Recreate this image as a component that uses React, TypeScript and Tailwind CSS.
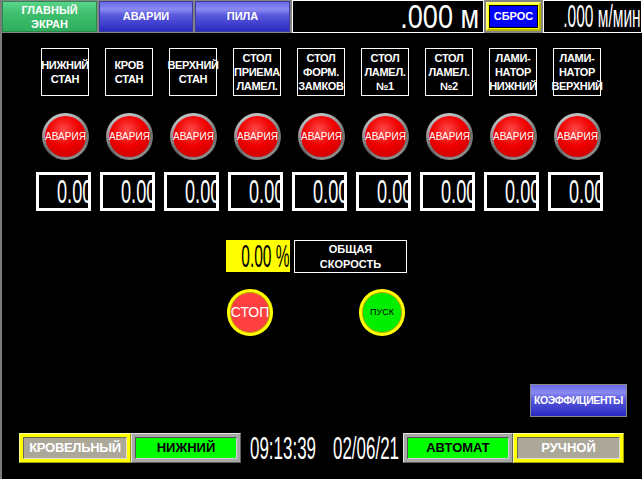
import React from "react";

const labels = [
  ["НИЖНИЙ", "СТАН"],
  ["КРОВ", "СТАН"],
  ["ВЕРХНИЙ", "СТАН"],
  ["СТОЛ", "ПРИЕМА", "ЛАМЕЛ."],
  ["СТОЛ", "ФОРМ.", "ЗАМКОВ"],
  ["СТОЛ", "ЛАМЕЛ.", "№1"],
  ["СТОЛ", "ЛАМЕЛ.", "№2"],
  ["ЛАМИ-", "НАТОР", "НИЖНИЙ"],
  ["ЛАМИ-", "НАТОР", "ВЕРХНИЙ"],
];

const blueBtn =
  "bg-[linear-gradient(to_bottom,#6a6ae6_0%,#8a8af2_25%,#5a5ade_45%,#2a2ac2_100%)]";

const App = () => {
  return (
    <div className="w-[642px] h-[479px] bg-black border-l-2 border-[#7c7c7c] flex flex-col overflow-hidden font-['Liberation_Sans',Arial,sans-serif] select-none">
      {/* TOP BAR */}
      <div className="h-[33px] bg-[#848484] flex gap-[2px] shrink-0">
        <div className="w-[95px] shrink-0 my-px bg-[linear-gradient(to_bottom,#5ad48a_0%,#3fbf6e_40%,#2fae5e_100%)] border border-[#2a8a4c] flex flex-col items-center justify-center text-white font-bold text-[11px] leading-[14px]">
          <span>ГЛАВНЫЙ</span>
          <span>ЭКРАН</span>
        </div>
        <div className={`w-[94px] shrink-0 my-px ${blueBtn} border border-[#3a3aa0] flex items-center justify-center text-white font-bold text-[11px]`}>
          АВАРИИ
        </div>
        <div className={`w-[95px] shrink-0 my-px ${blueBtn} border border-[#3a3aa0] flex items-center justify-center text-white font-bold text-[11px]`}>
          ПИЛА
        </div>
        <div className="w-[192px] shrink-0 bg-black border border-white flex items-center justify-end pr-[4px]">
          <span className="w-[76px] flex justify-end">
            <span className="inline-block shrink-0 text-white text-[33px] leading-[28px] font-light scale-x-[0.82] origin-right whitespace-nowrap">
              .000 м
            </span>
          </span>
        </div>
        <div className="w-[55px] shrink-0 my-[2px] bg-[#ffff00] border-t-2 border-l-2 border-[#ffff66] border-b-2 border-r-2 border-b-[#b8b800] border-r-[#b8b800] p-px">
          <div className="w-full h-full bg-[#0000ff] border border-black flex items-center justify-center text-white font-bold text-[11px]">
            СБРОС
          </div>
        </div>
        <div className="w-[99px] shrink-0 bg-black border border-white flex items-center justify-end overflow-hidden">
          <span className="w-[80px] flex justify-end">
            <span className="inline-block shrink-0 text-white text-[31px] leading-[28px] font-light scale-x-[0.5] origin-right whitespace-nowrap">
              .000 м/мин
            </span>
          </span>
        </div>
      </div>

      {/* LABELS */}
      <div className="flex gap-[16px] pl-[39px] mt-[15px]">
        {labels.map((l, i) => (
          <div
            key={i}
            className="w-[48px] h-[48px] shrink-0 border border-white flex flex-col items-center justify-center text-white font-bold text-[11px] leading-[14px] tracking-[-0.3px] whitespace-nowrap"
          >
            {l.map((t) => (
              <span key={t}>{t}</span>
            ))}
          </div>
        ))}
      </div>

      {/* ALARM LAMPS */}
      <div className="flex gap-[17px] pl-[40px] mt-[17px]">
        {labels.map((_, i) => (
          <div
            key={i}
            className="w-[47px] h-[47px] shrink-0 rounded-full bg-[linear-gradient(160deg,#d8d8d8,#6a6a6a_60%,#9a9a9a)] p-[3px]"
          >
            <div className="w-full h-full rounded-full bg-[radial-gradient(circle_at_45%_35%,#ff4a4a_0%,#f00000_45%,#d00000_80%,#b00000_100%)] flex items-center justify-center text-white text-[10px] whitespace-nowrap">
              АВАРИЯ
            </div>
          </div>
        ))}
      </div>

      {/* VALUE BOXES */}
      <div className="flex gap-[9px] pl-[34px] mt-[12px]">
        {labels.map((_, i) => (
          <div
            key={i}
            className="w-[55px] h-[39px] shrink-0 border-[3px] border-white overflow-hidden flex items-center pl-[18px]"
          >
            <span className="inline-block text-white text-[33px] leading-none font-light scale-x-[0.55] origin-left whitespace-nowrap">
              0.00
            </span>
          </div>
        ))}
      </div>

      {/* TOTAL SPEED */}
      <div className="flex gap-[4px] pl-[224px] mt-[29px] items-start">
        <div className="w-[64px] h-[32px] shrink-0 bg-[#ffff00] overflow-hidden flex items-center justify-end">
          <span className="inline-block text-black text-[31px] leading-none font-light scale-x-[0.5] origin-right whitespace-nowrap">
            0.00 %
          </span>
        </div>
        <div className="w-[113px] h-[33px] shrink-0 border border-white flex flex-col items-center justify-center text-white font-bold text-[11px] leading-[15px]">
          <span>ОБЩАЯ</span>
          <span>СКОРОСТЬ</span>
        </div>
      </div>

      {/* STOP / START */}
      <div className="flex gap-[86px] pl-[225px] mt-[16px]">
        <div className="w-[46px] h-[47px] rounded-full bg-[#ffff00] p-[3px]">
          <div className="w-full h-full rounded-full bg-[#ff4040] border border-[#c0a000] flex items-center justify-center text-white text-[14px]">
            СТОП
          </div>
        </div>
        <div className="w-[46px] h-[47px] rounded-full bg-[#ffff00] p-[3px]">
          <div className="w-full h-full rounded-full bg-[#00ee00] border border-[#c0a000] flex items-center justify-center text-black text-[9px]">
            ПУСК
          </div>
        </div>
      </div>

      {/* COEFFICIENTS */}
      <div className="flex justify-end pr-[15px] mt-[48px]">
        <div className={`w-[97px] h-[33px] ${blueBtn} border border-[#8a8a8a] flex items-center justify-center text-white font-bold text-[10.5px] tracking-[-0.4px] whitespace-nowrap`}>
          КОЭФФИЦИЕНТЫ
        </div>
      </div>

      {/* BOTTOM BAR */}
      <div className="flex items-center pl-[17px] mt-[16px] h-[30px]">
        <div className="w-[112px] h-[30px] shrink-0 bg-[#ffff00] border-t border-l border-[#ffff99] border-b border-r border-b-[#a0a000] border-r-[#a0a000] p-[3px]">
          <div className="w-full h-full bg-[#aca899] border border-t-[#6a6a60] border-l-[#6a6a60] border-b-[#e0e0d8] border-r-[#e0e0d8] flex items-center justify-center text-white font-bold text-[13px] tracking-[-0.3px]">
            КРОВЕЛЬНЫЙ
          </div>
        </div>
        <div className="w-[110px] h-[30px] shrink-0 bg-[#a8a8a8] border-t border-l border-[#e0e0e0] border-b border-r border-b-[#606060] border-r-[#606060] p-[3px]">
          <div className="w-full h-full bg-[#00ff00] border border-t-[#505050] border-l-[#505050] border-b-[#d0d0d0] border-r-[#d0d0d0] flex items-center justify-center text-black font-bold text-[13px]">
            НИЖНИЙ
          </div>
        </div>
        <div className="w-[162px] shrink-0 flex items-center pl-[9px] h-[30px] gap-[17px]">
          <span className="inline-block w-[66px] shrink-0 text-white text-[32px] leading-none font-light whitespace-nowrap">
            <span className="inline-block scale-x-[0.53] origin-left">09:13:39</span>
          </span>
          <span className="inline-block w-[66px] shrink-0 text-white text-[32px] leading-none font-light whitespace-nowrap">
            <span className="inline-block scale-x-[0.53] origin-left">02/06/21</span>
          </span>
        </div>
        <div className="w-[110px] h-[30px] shrink-0 bg-[#a8a8a8] border-t border-l border-[#e0e0e0] border-b border-r border-b-[#606060] border-r-[#606060] p-[3px]">
          <div className="w-full h-full bg-[#00ff00] border border-t-[#505050] border-l-[#505050] border-b-[#d0d0d0] border-r-[#d0d0d0] flex items-center justify-center text-black font-bold text-[13px]">
            АВТОМАТ
          </div>
        </div>
        <div className="w-[111px] h-[30px] shrink-0 bg-[#ffff00] border-t border-l border-[#ffff99] border-b border-r border-b-[#a0a000] border-r-[#a0a000] p-[3px]">
          <div className="w-full h-full bg-[#aca899] border border-t-[#6a6a60] border-l-[#6a6a60] border-b-[#e0e0d8] border-r-[#e0e0d8] flex items-center justify-center text-white font-bold text-[13px]">
            РУЧНОЙ
          </div>
        </div>
      </div>
    </div>
  );
};

export default App;
